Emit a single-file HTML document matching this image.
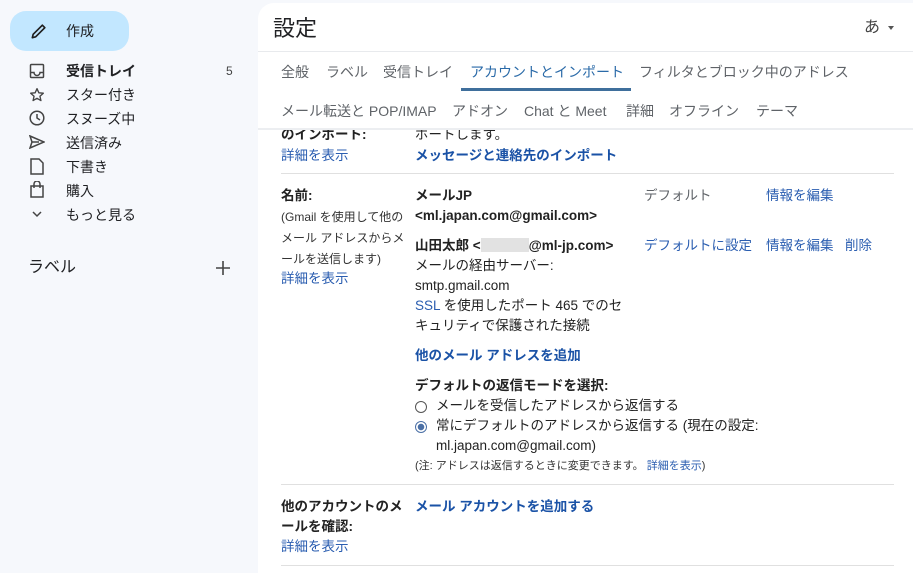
<!DOCTYPE html>
<html><head><meta charset="utf-8"><style>
*{margin:0;padding:0;box-sizing:border-box}
body{width:913px;height:566px;overflow:hidden;background:#f6f8fc;font-family:"Liberation Sans","Noto Sans CJK JP",sans-serif;color:#202124;position:relative}
.a{position:absolute;white-space:nowrap;line-height:20px}
.s{font-size:14px;color:#202124}
.c{font-size:13.5px;color:#222}
.b{font-weight:bold}
.l{color:#2a5db0}
.lb{color:#1a52a6;font-weight:bold}
.g{color:#5f6368}
svg{position:absolute}
#ct{position:absolute;left:0;top:3px;width:913px;height:566px}
</style></head><body>
<!-- sidebar -->
<div class="a" style="left:10px;top:11px;width:119px;height:40px;border-radius:16px;background:#c2e7ff"></div>
<svg style="left:29px;top:21px" width="20" height="20" viewBox="0 0 24 24"><path d="M4 20l1-4L16 5l3 3L8 19z" fill="none" stroke="#1f1f1f" stroke-width="2" stroke-linejoin="round"/></svg>
<div class="a s" style="left:66px;top:21px">作成</div>
<svg style="left:29px;top:63px" width="16" height="16" viewBox="0 0 16 16" fill="none" stroke="#444" stroke-width="1.5"><rect x="1.5" y="1.5" width="13" height="13" rx="1"/><path d="M1.5 9.5h3.5a3 3 0 006 0h3.5"/></svg>
<div class="a s b" style="left:66px;top:61px">受信トレイ</div>
<div class="a" style="left:226px;top:61px;font-size:12px;color:#444">5</div>
<svg style="left:29px;top:87px" width="16" height="16" viewBox="0 0 24 24" fill="none" stroke="#444" stroke-width="2" stroke-linejoin="round"><path d="M12 2.5l2.8 6.2 6.7.6-5.1 4.5 1.5 6.6L12 17l-5.9 3.4 1.5-6.6L2.5 9.3l6.7-.6z"/></svg>
<div class="a s" style="left:66px;top:85px">スター付き</div>
<svg style="left:29px;top:110px" width="16" height="16" viewBox="0 0 16 16" fill="none" stroke="#444" stroke-width="1.5"><circle cx="8" cy="8" r="6.8"/><path d="M8 4v4l3 2"/></svg>
<div class="a s" style="left:66px;top:109px">スヌーズ中</div>
<svg style="left:29px;top:135px" width="16" height="14" viewBox="0 0 16 14" fill="none" stroke="#444" stroke-width="1.5"><path d="M1 1l14 6-14 6 2-6z M3 7h7"/></svg>
<div class="a s" style="left:66px;top:133px">送信済み</div>
<svg style="left:30px;top:158px" width="14" height="17" viewBox="0 0 14 17" fill="none" stroke="#444" stroke-width="1.5"><path d="M1 1h8l4 4v11H1z"/></svg>
<div class="a s" style="left:66px;top:157px">下書き</div>
<svg style="left:30px;top:181px" width="14" height="17" viewBox="0 0 14 17" fill="none" stroke="#444" stroke-width="1.5"><path d="M1 5h12v11H1z M4 7V3a3 3 0 016 0v4"/></svg>
<div class="a s" style="left:66px;top:181px">購入</div>
<svg style="left:31px;top:210px" width="12" height="8" viewBox="0 0 12 8" fill="none" stroke="#444" stroke-width="1.5"><path d="M2 2l4 4 4-4"/></svg>
<div class="a s" style="left:66px;top:205px">もっと見る</div>
<div class="a" style="left:28px;top:258px;font-size:16px;color:#202124">ラベル</div>
<svg style="left:216px;top:261px" width="14" height="14" viewBox="0 0 14 14" stroke="#444" stroke-width="1.6"><path d="M7 0v14M0 7h14"/></svg>
<!-- main card -->
<div class="a" style="left:258px;top:3px;width:660px;height:570px;background:#fff;border-radius:16px 0 0 0"></div>
<div class="a" style="left:273px;top:16px;font-size:22px;line-height:26px;color:#202124">設定</div>
<div class="a" style="left:864px;top:18px;font-size:16px;color:#444">あ</div>
<div class="a" style="left:888px;top:26px;width:0;height:0;border-left:3.5px solid transparent;border-right:3.5px solid transparent;border-top:4px solid #555"></div>
<div class="a" style="left:258px;top:51px;width:655px;height:1px;background:#e8eaed"></div>
<div class="a s g" style="left:281px;top:62px">全般</div>
<div class="a s g" style="left:326px;top:62px">ラベル</div>
<div class="a s g" style="left:383px;top:62px">受信トレイ</div>
<div class="a s" style="left:470px;top:62px;color:#2a6aa8">アカウントとインポート</div>
<div class="a" style="left:461px;top:88px;width:170px;height:3px;background:#3f6f9c"></div>
<div class="a s g" style="left:639px;top:62px">フィルタとブロック中のアドレス</div>
<div class="a s g" style="left:281px;top:101px">メール転送と POP/IMAP</div>
<div class="a s g" style="left:452px;top:101px">アドオン</div>
<div class="a s g" style="left:524px;top:101px">Chat と Meet</div>
<div class="a s g" style="left:626px;top:101px">詳細</div>
<div class="a s g" style="left:669px;top:101px">オフライン</div>
<div class="a s g" style="left:756px;top:101px">テーマ</div>
<!-- content -->
<div style="position:absolute;left:258px;top:130px;width:655px;height:436px;overflow:hidden">
<div class="a c b" style="left:23px;top:-5px">のインポート:</div>
<div class="a c" style="left:157px;top:-5px">ポートします。</div>
</div>
<div class="a" style="left:258px;top:128px;width:655px;height:2px;background:#eceef1"></div>
<div id="ct">
<div class="a c l" style="left:281px;top:143px">詳細を表示</div>
<div class="a c lb" style="left:415px;top:143px">メッセージと連絡先のインポート</div>
<div class="a c b" style="left:281px;top:183px">名前:</div>
<div class="a" style="left:281px;top:204px;font-size:12px;color:#333">(Gmail を使用して他の</div>
<div class="a" style="left:281px;top:225px;font-size:12px;color:#333">メール アドレスからメ</div>
<div class="a" style="left:281px;top:246px;font-size:12px;color:#333">ールを送信します)</div>
<div class="a c l" style="left:281px;top:266px">詳細を表示</div>
<div class="a c b" style="left:415px;top:183px">メールJP</div>
<div class="a c b" style="left:415px;top:203px">&lt;ml.japan.com@gmail.com&gt;</div>
<div class="a c g" style="left:644px;top:183px">デフォルト</div>
<div class="a c l" style="left:766px;top:183px">情報を編集</div>
<div class="a c b" style="left:415px;top:233px">山田太郎 &lt;<span style="display:inline-block;width:48px;height:14px;background:#e2e2e2;vertical-align:-2px"></span>@ml-jp.com&gt;</div>
<div class="a c l" style="left:644px;top:233px">デフォルトに設定</div>
<div class="a c l" style="left:766px;top:233px">情報を編集</div>
<div class="a c l" style="left:845px;top:233px">削除</div>
<div class="a c" style="left:415px;top:253px">メールの経由サーバー: </div>
<div class="a c" style="left:415px;top:273px">smtp.gmail.com</div>
<div class="a c" style="left:415px;top:293px"><span class="l">SSL</span> を使用したポート 465 でのセ</div>
<div class="a c" style="left:415px;top:313px">キュリティで保護された接続</div>
<div class="a c lb" style="left:415px;top:343px">他のメール アドレスを追加</div>
<div class="a c b" style="left:415px;top:373px">デフォルトの返信モードを選択:</div>
<div class="a" style="left:415px;top:398px;width:12px;height:12px;border:1px solid #555;border-radius:50%"></div>
<div class="a c" style="left:436px;top:393px">メールを受信したアドレスから返信する</div>
<div class="a" style="left:415px;top:418px;width:12px;height:12px;border:1px solid #4a6fa5;border-radius:50%;background:radial-gradient(circle,#4a6fa5 3px,#fff 3.5px)"></div>
<div class="a c" style="left:436px;top:413px">常にデフォルトのアドレスから返信する (現在の設定:</div>
<div class="a c" style="left:436px;top:433px">ml.japan.com@gmail.com)</div>
<div class="a" style="left:415px;top:453px;font-size:11px;color:#333">(注: アドレスは返信するときに変更できます。 <span class="l">詳細を表示</span>)</div>
<div class="a c b" style="left:281px;top:494px">他のアカウントのメ</div>
<div class="a c b" style="left:281px;top:514px">ールを確認:</div>
<div class="a c l" style="left:281px;top:534px">詳細を表示</div>
<div class="a c lb" style="left:415px;top:494px">メール アカウントを追加する</div>
</div>
<div class="a" style="left:281px;top:173px;width:613px;height:1px;background:#e0e0e0"></div>
<div class="a" style="left:281px;top:484px;width:613px;height:1px;background:#e0e0e0"></div>
<div class="a" style="left:281px;top:565px;width:613px;height:1px;background:#e0e0e0"></div>
</body></html>
